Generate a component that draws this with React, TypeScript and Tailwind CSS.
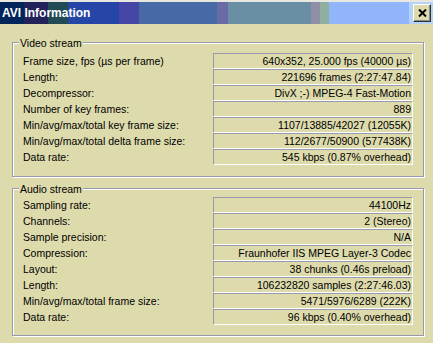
const video: [string, string][] = [
  ["Frame size, fps (µs per frame)", "640x352, 25.000 fps (40000 µs)"],
  ["Length:", "221696 frames (2:27:47.84)"],
  ["Decompressor:", "DivX ;-) MPEG-4 Fast-Motion"],
  ["Number of key frames:", "889"],
  ["Min/avg/max/total key frame size:", "1107/13885/42027 (12055K)"],
  ["Min/avg/max/total delta frame size:", "112/2677/50900 (577438K)"],
  ["Data rate:", "545 kbps (0.87% overhead)"],
];

const audio: [string, string][] = [
  ["Sampling rate:", "44100Hz"],
  ["Channels:", "2 (Stereo)"],
  ["Sample precision:", "N/A"],
  ["Compression:", "Fraunhofer IIS MPEG Layer-3 Codec"],
  ["Layout:", "38 chunks (0.46s preload)"],
  ["Length:", "106232820 samples (2:27:46.03)"],
  ["Min/avg/max/total frame size:", "5471/5976/6289 (222K)"],
  ["Data rate:", "96 kbps (0.40% overhead)"],
];

// title bar is painted in flat bands
const bands = [
  ["w-[24px]", "bg-[#00255a]"],
  ["w-[24px]", "bg-[#23225a]"],
  ["w-[20px]", "bg-[#224a55]"],
  ["w-[51px]", "bg-[#2546a6]"],
  ["w-[20px]", "bg-[#4646a6]"],
  ["w-[78px]", "bg-[#476aa6]"],
  ["w-[11px]", "bg-[#6a6aa6]"],
  ["w-[83px]", "bg-[#6a8fa5]"],
  ["w-[9px]", "bg-[#8f8fa6]"],
  ["w-[9px]", "bg-[#8fb0a0]"],
  ["w-[80px]", "bg-[#91b5fa]"],
];

function Row({ label, value }: { label: string; value: string }) {
  return (
    <div className="flex h-[16px] items-center">
      <div className="flex-1 leading-[14px] whitespace-nowrap">{label}</div>
      <div className="w-[200px] h-[16px] border border-t-[#9899ae] border-l-[#9899ae] border-r-white border-b-white text-right pr-[1px] leading-[14px] whitespace-nowrap">
        {value}
      </div>
    </div>
  );
}

function Group({
  title,
  rows,
  className,
}: {
  title: string;
  rows: [string, string][];
  className: string;
}) {
  return (
    <div
      className={`relative border border-[#9899ae] shadow-[inset_1px_1px_0_#fff,1px_1px_0_#fff] px-[10px] ${className}`}
    >
      <span className="absolute left-[6px] top-[-7px] px-[1px] bg-[#dddbac] leading-[14px]">
        {title}
      </span>
      {rows.map(([l, v]) => (
        <Row key={l + v} label={l} value={v} />
      ))}
    </div>
  );
}

export default function App() {
  return (
    <div className="w-[433px] h-[343px] bg-[#dddbac] text-black text-[10.5px] font-['Liberation_Sans',Arial,sans-serif] flex flex-col overflow-hidden">
      <div className="h-[2px] bg-[#e8e8e0]" />
      <div className="relative flex h-[22px]">
        {bands.map(([w, c], i) => (
          <div key={i} className={`${w} ${c}`} />
        ))}
        <div className="flex-1 bg-[#b5d3fa] flex items-center pl-[4px]">
          <button className="w-[18px] h-[18px] bg-[#dddbac] border border-t-white border-l-white border-r-[#303030] border-b-[#303030] shadow-[inset_-1px_-1px_0_#8a8a8a] flex items-center justify-center">
            <svg width="9" height="8" viewBox="0 0 9 8">
              <path d="M1 0.5 L8 7.5 M8 0.5 L1 7.5" stroke="#000" strokeWidth="2" />
            </svg>
          </button>
        </div>
        <span className="absolute left-[2px] top-0 leading-[22px] text-[12px] font-bold text-white">
          AVI Information
        </span>
      </div>
      <div className="flex flex-col pl-[12px] pr-[9px] pt-[18px]">
        <Group title="Video stream" rows={video} className="pt-[10px] pb-[11px]" />
        <Group title="Audio stream" rows={audio} className="mt-[11px] pt-[8px] pb-[10px]" />
      </div>
    </div>
  );
}
